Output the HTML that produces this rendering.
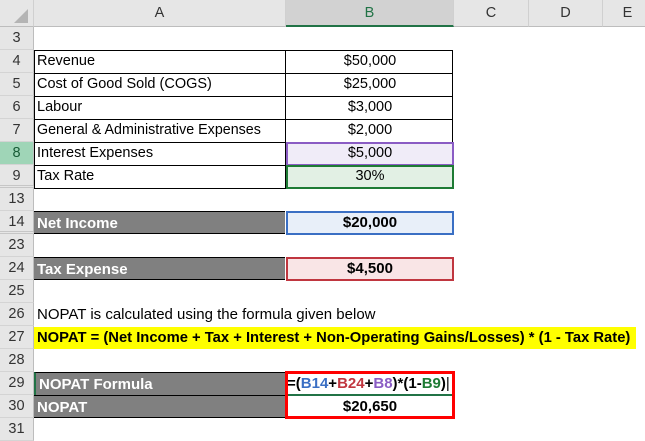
<!DOCTYPE html>
<html><head><style>
*{margin:0;padding:0;box-sizing:border-box}
body{width:645px;height:441px;background:#fff;position:relative;overflow:hidden;font-family:"Liberation Sans",Arial,sans-serif;font-size:14.5px;color:#000}
.a{position:absolute}
.rh{position:absolute;left:0;width:34px;height:23px;background:#e6e6e6;border-bottom:1px solid #d4d4d4;border-right:1px solid #bdbdbd;text-align:center;line-height:23px;font-size:14.5px;color:#333}
.t{position:absolute;line-height:23px;height:23px;white-space:nowrap}
.ch{position:absolute;top:0;height:27px;line-height:27px;text-align:center;background:#e6e6e6;border-right:1px solid #d0d0d0;border-bottom:1px solid #bdbdbd;color:#333;font-size:14.5px}
.g{background:#808080;color:#fff;font-weight:bold;padding-left:3px;font-size:15px}
</style></head><body>
<div class="ch" style="left:0;width:34px"><svg width="34" height="27"><polygon points="28,9 28,23 14,23" fill="#b4b4b4"/></svg></div>
<div class="ch" style="left:34px;width:252px">A</div>
<div class="ch" style="left:286px;width:168px;background:#d2d2d2;color:#217346;border-bottom:2px solid #217346">B</div>
<div class="ch" style="left:454px;width:75px">C</div>
<div class="ch" style="left:529px;width:74px">D</div>
<div class="ch" style="left:603px;width:50px">E</div>

<div class="rh" style="top:27px">3</div>
<div class="rh" style="top:50px">4</div>
<div class="rh" style="top:73px">5</div>
<div class="rh" style="top:96px">6</div>
<div class="rh" style="top:119px">7</div>
<div class="rh" style="top:142px;background:#9fd5b7;color:#185c37">8</div>
<div class="rh" style="top:165px;border-bottom:3px double #c6c6c6">9</div>
<div class="rh" style="top:188px">13</div>
<div class="rh" style="top:211px;border-bottom:3px double #c6c6c6">14</div>
<div class="rh" style="top:234px">23</div>
<div class="rh" style="top:257px">24</div>
<div class="rh" style="top:280px">25</div>
<div class="rh" style="top:303px">26</div>
<div class="rh" style="top:326px">27</div>
<div class="rh" style="top:349px">28</div>
<div class="rh" style="top:372px">29</div>
<div class="rh" style="top:395px">30</div>
<div class="rh" style="top:418px">31</div>

<div class="a" style="left:34px;top:50px;width:419px;height:139px;border:1px solid #000"></div>
<div class="a" style="left:285px;top:50px;width:1px;height:139px;background:#000"></div>
<div class="a" style="left:34px;top:73px;width:419px;height:1px;background:#000"></div>
<div class="a" style="left:34px;top:96px;width:419px;height:1px;background:#000"></div>
<div class="a" style="left:34px;top:119px;width:419px;height:1px;background:#000"></div>
<div class="a" style="left:34px;top:142px;width:419px;height:1px;background:#000"></div>
<div class="a" style="left:34px;top:165px;width:419px;height:1px;background:#000"></div>
<div class="a" style="left:286px;top:142px;width:168px;height:24px;background:#f0ecf8;border:2px solid #8a5cc4"></div>
<div class="a" style="left:286px;top:165px;width:168px;height:24px;background:#e2f0e4;border:2px solid #1e7b34"></div>

<div class="t" style="left:37px;top:50px">Revenue</div>
<div class="t" style="left:37px;top:73px">Cost of Good Sold (COGS)</div>
<div class="t" style="left:37px;top:96px">Labour</div>
<div class="t" style="left:37px;top:119px;font-size:14.5px;transform:scaleX(0.985);transform-origin:left">General &amp; Administrative Expenses</div>
<div class="t" style="left:37px;top:142px">Interest Expenses</div>
<div class="t" style="left:37px;top:165px">Tax Rate</div>
<div class="t" style="left:286px;width:168px;text-align:center;top:50px">$50,000</div>
<div class="t" style="left:286px;width:168px;text-align:center;top:73px">$25,000</div>
<div class="t" style="left:286px;width:168px;text-align:center;top:96px">$3,000</div>
<div class="t" style="left:286px;width:168px;text-align:center;top:119px">$2,000</div>
<div class="t" style="left:286px;width:168px;text-align:center;top:142px">$5,000</div>
<div class="t" style="left:286px;width:168px;text-align:center;top:165px">30%</div>

<div class="t g" style="left:34px;top:211px;width:251px;border-top:1px solid #000;border-bottom:1px solid #000">Net Income</div>
<div class="a" style="left:286px;top:211px;width:168px;height:24px;background:#e8eff9;border:2px solid #3a6fc4"></div>
<div class="t" style="left:286px;width:168px;text-align:center;top:211px;font-weight:bold;font-size:15px">$20,000</div>
<div class="t g" style="left:34px;top:257px;width:251px;border-top:1px solid #000;border-bottom:1px solid #000">Tax Expense</div>
<div class="a" style="left:286px;top:257px;width:168px;height:24px;background:#f9e5e6;border:2px solid #c0363f"></div>
<div class="t" style="left:286px;width:168px;text-align:center;top:257px;font-weight:bold;font-size:15px">$4,500</div>

<div class="t" style="left:37px;top:303px;font-size:15px">NOPAT is calculated using the formula given below</div>
<div class="t" style="left:34px;top:327px;width:602px;height:22px;background:#ffff00;font-weight:bold;padding-left:3px;font-size:15px;line-height:22px"><span style="display:inline-block;transform:scaleX(0.985);transform-origin:left">NOPAT = (Net Income + Tax + Interest + Non-Operating Gains/Losses) * (1 - Tax Rate)</span></div>

<div class="t g" style="left:34px;top:372px;width:251px;border-top:1px solid #000;border-left:2px solid #217346">NOPAT Formula</div>
<div class="t g" style="left:34px;top:395px;width:251px;border-top:1px solid #000;border-bottom:1px solid #000">NOPAT</div>
<div class="a" style="left:287px;top:394px;width:166px;height:2px;background:#217346"></div>
<div class="t" style="left:287px;top:372px;font-weight:bold;font-size:15px">=(<span style="color:#3a6fc4">B14</span>+<span style="color:#c0363f">B24</span>+<span style="color:#8a5cc4">B8</span>)*(1-<span style="color:#1e7b34">B9</span>)<span style="font-weight:normal">|</span></div>
<div class="t" style="left:286px;width:168px;text-align:center;top:395px;font-weight:bold;font-size:15px">$20,650</div>
<div class="a" style="left:285px;top:371px;width:170px;height:48px;border:3px solid #ff0000"></div>
</body></html>
